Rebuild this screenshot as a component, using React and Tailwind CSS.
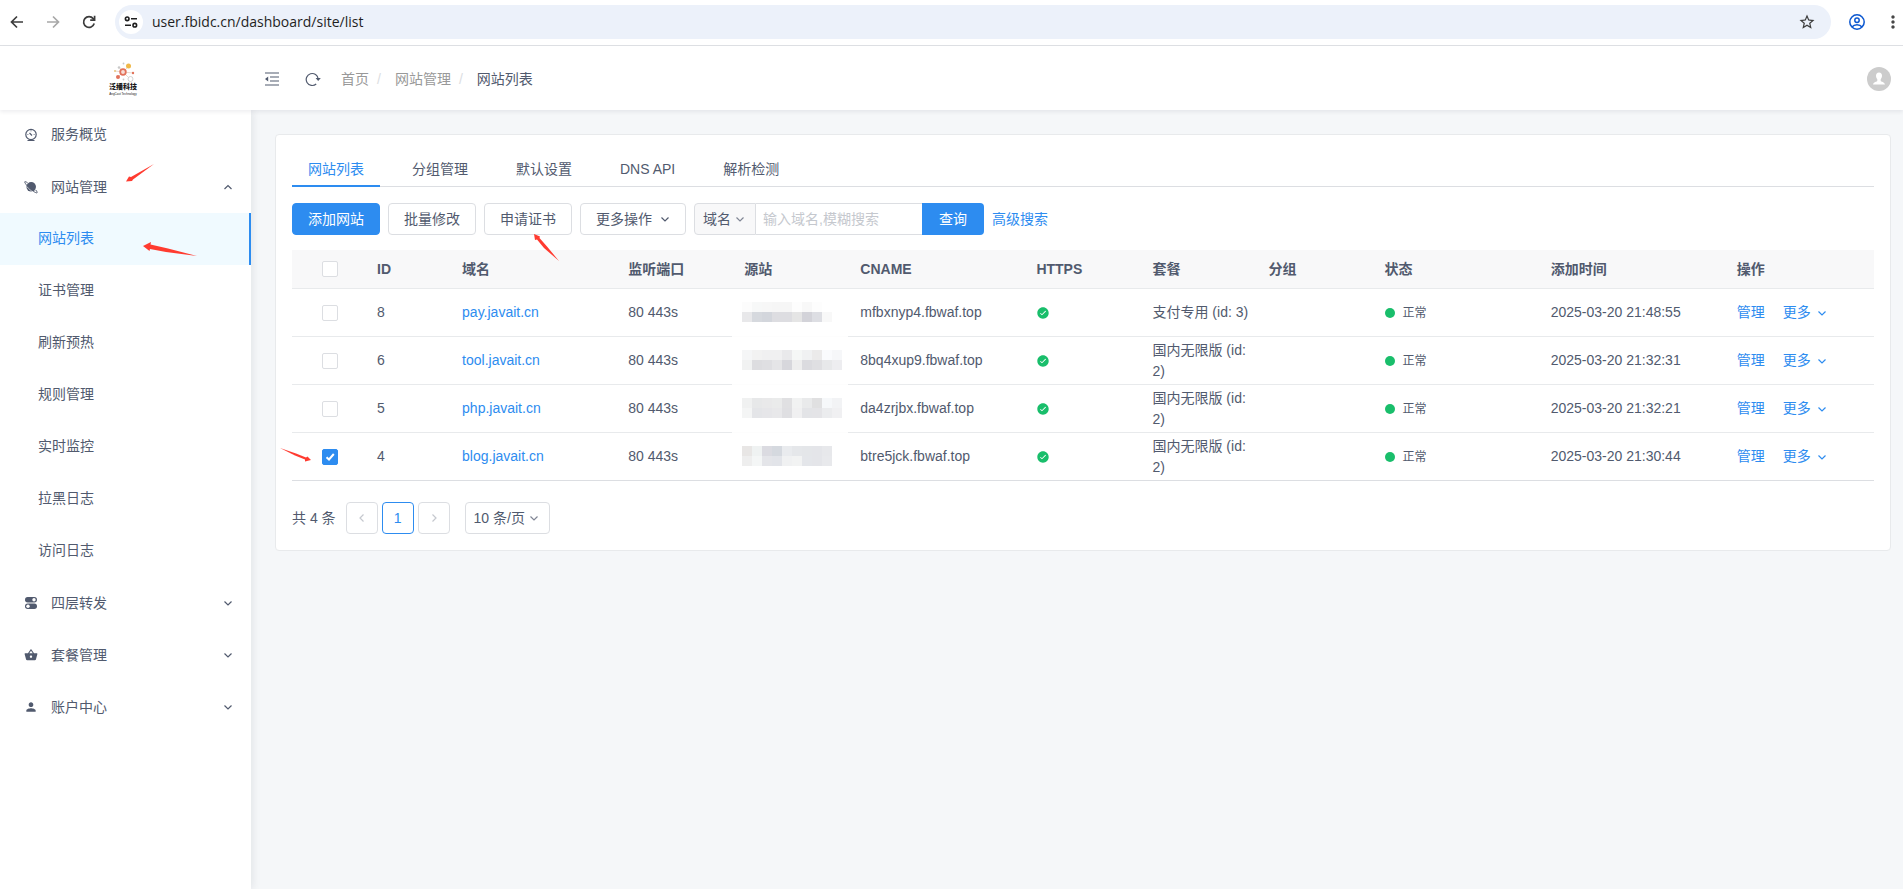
import React, { useState } from 'react';
import { IoIosCheckmarkCircle } from 'react-icons/io';
import { MdOutlineStarBorder, MdMoreVert, MdPerson, MdShoppingBasket } from 'react-icons/md';

const sites = [
  {
    id: 8,
    domain: 'pay.javait.cn',
    cname: 'mfbxnyp4.fbwaf.top',
    plan: '支付专用 (id: 3)',
    time: '2025-03-20 21:48:55',
    mosaic: [
      ['#fcfcfc', '#f7f8f8', '#f7f7f7', '#f6f6f6', '#f6f6f6', '#fdfdfd', '#f8f8f8', '#fdfdfd', '#fff', '#fff'],
      ['#e8e8ea', '#d6d9de', '#d3d6dc', '#dddde1', '#dddde1', '#e5e5e5', '#d3d3d9', '#dddee3', '#f8f8f8', '#fff'],
    ],
  },
  {
    id: 6,
    domain: 'tool.javait.cn',
    cname: '8bq4xup9.fbwaf.top',
    plan: '国内无限版 (id: 2)',
    time: '2025-03-20 21:32:31',
    mosaic: [
      ['#f5f6f7', '#f2f2f2', '#f0f0f1', '#f0f0f1', '#e9e9eb', '#f5f7f6', '#f0f1f2', '#ebeaea', '#fafbfd', '#f6f7f9'],
      ['#f1f2f2', '#dddde0', '#dfdfe2', '#e5e5e7', '#d7d7dc', '#eeeeee', '#dbdbdf', '#dfdfe2', '#e7e8ea', '#ededf0'],
    ],
  },
  {
    id: 5,
    domain: 'php.javait.cn',
    cname: 'da4zrjbx.fbwaf.top',
    plan: '国内无限版 (id: 2)',
    time: '2025-03-20 21:32:21',
    mosaic: [
      ['#f0f1f1', '#e7e8e9', '#e9e9ea', '#eaebeb', '#e0e0e2', '#f1f2f2', '#e9eaeb', '#e0e0e1', '#f6f8fa', '#f2f3f5'],
      ['#f4f5f5', '#e4e5e8', '#e6e6e9', '#e8e8ea', '#dfdfe2', '#f0f0f1', '#e3e4e7', '#e4e4e7', '#ebecee', '#f0f0f2'],
    ],
  },
  {
    id: 4,
    domain: 'blog.javait.cn',
    cname: 'btre5jck.fbwaf.top',
    plan: '国内无限版 (id: 2)',
    time: '2025-03-20 21:30:44',
    mosaic: [
      ['#e8e6e5', '#eff2f2', '#dbdbe1', '#d5d9df', '#e9ebee', '#e5e7ea', '#e4e6e9', '#e4e5e9', '#e7e8eb', '#fff'],
      ['#eeeeee', '#f4f6f6', '#e4e5e9', '#e2e4e9', '#f0f1f2', '#f2f3f3', '#e4e6ea', '#e4e5e9', '#e8e9ec', '#fff'],
    ],
  },
];

const siteMenu = ['网站列表', '证书管理', '刷新预热', '规则管理', '实时监控', '拉黑日志', '访问日志'];

const tabs = ['网站列表', '分组管理', '默认设置', 'DNS API', '解析检测'];

const Chevron = ({ className = '', d = 'M1.5 3.5 5 7l3.5-3.5' }) => (
  <svg className={`size-[10px] shrink-0 ${className}`} viewBox="0 0 10 10" fill="none" stroke="currentColor" strokeWidth="1.2" aria-hidden="true">
    <path d={d} />
  </svg>
);

const Button = ({ primary, children }) => (
  <button
    className={`flex h-8 items-center gap-1 rounded border px-[15px] ${
      primary ? 'border-[#2d8cf0] bg-[#2d8cf0] text-white' : 'border-[#dcdee2] bg-white'
    }`}
  >
    {children}
  </button>
);

const Checkbox = ({ label, checked, onChange }) => (
  <span className="relative block size-4">
    <input
      type="checkbox"
      aria-label={label}
      checked={checked}
      onChange={onChange}
      className="block size-4 appearance-none rounded-xs border border-[#dcdee2] bg-white checked:border-[#2d8cf0] checked:bg-[#2d8cf0]"
    />
    {checked && (
      <svg className="pointer-events-none absolute inset-0 size-4" viewBox="0 0 16 16" fill="none" stroke="#fff" strokeWidth="2" aria-hidden="true">
        <path d="M4.5 8.2 7 10.5 11.8 5" />
      </svg>
    )}
  </span>
);

const BrowserBar = () => (
  <div className="flex h-[46px] items-center border-b border-[#dfe1e5] bg-white pb-px pl-2 text-[#474747]">
    <button aria-label="Back" className="flex w-[18px] justify-center text-[#3c3c3c]">
      <svg className="size-4" viewBox="0 0 16 16" fill="none" stroke="currentColor" strokeWidth="1.7">
        <path d="M14 8H3M8 2.5 2.5 8 8 13.5" />
      </svg>
    </button>
    <button aria-label="Forward" className="ml-[18px] flex w-[18px] justify-center text-[#a8a8a8]">
      <svg className="size-4" viewBox="0 0 16 16" fill="none" stroke="currentColor" strokeWidth="1.7">
        <path d="M2 8h11M8 2.5 13.5 8 8 13.5" />
      </svg>
    </button>
    <button aria-label="Reload" className="ml-[18px] flex w-[18px] justify-center text-[#3c3c3c]">
      <svg className="size-4" viewBox="0 0 16 16" fill="none" stroke="currentColor" strokeWidth="1.7">
        <path d="M13.2 9.5A5.4 5.4 0 1 1 12.2 4.6L13.3 6" />
        <path d="M13.6 1.8V6.2H9.2" />
      </svg>
    </button>
    <div className="ml-[17px] flex h-[34px] flex-1 items-center rounded-full bg-[#ecf1fa] pr-[15px] pl-1">
      <button aria-label="Site information" className="flex size-6 items-center justify-center rounded-full bg-white text-[#1f1f1f]">
        <svg className="size-[14px]" viewBox="0 0 14 14" fill="none" stroke="currentColor" strokeWidth="1.6">
          <circle cx="3.2" cy="3.8" r="1.8" />
          <path d="M7 3.8h6M1 10.2h6" />
          <circle cx="10.8" cy="10.2" r="1.8" />
        </svg>
      </button>
      <input
        aria-label="Address"
        defaultValue="user.fbidc.cn/dashboard/site/list"
        className="ml-[9px] flex-1 bg-transparent font-['Open_Sans',sans-serif] text-sm text-[#1f1f1f] outline-none"
      />
      <button aria-label="Bookmark">
        <MdOutlineStarBorder className="size-[18px] text-[#3c3c3c]" />
      </button>
    </div>
    <button aria-label="Profile" className="ml-[18px] text-[#0b57d0]">
      <svg className="size-4" viewBox="0 0 16 16" fill="none" stroke="currentColor" strokeWidth="1.5">
        <circle cx="8" cy="8" r="7.2" />
        <circle cx="8" cy="6.3" r="2.2" />
        <path d="M3 13c1.200-1.600 3-2.300 5-2.300s3.800.7 5 2.300" />
      </svg>
    </button>
    <button aria-label="Menu" className="ml-[18px]">
      <MdMoreVert className="size-5" />
    </button>
  </div>
);

const Logo = () => (
  <div className="flex flex-col items-center text-[#1a1a1a]">
    <svg className="h-5 w-6" viewBox="0 0 24 20" fill="none" aria-hidden="true">
      <path d="M12 10 18 4M12 10 7 15M12 10 19 17M12 10 22 11M12 10 8 5M12 10 4 9" stroke="#e0c8b8" strokeWidth=".7" />
      <circle cx="12" cy="10" r="2.800" stroke="#e2725b" strokeWidth="1.800" fill="#f7ddd5" />
      <circle cx="17.500" cy="4" r="2.500" fill="#f0b848" />
      <circle cx="7" cy="15" r="2" fill="#e2725b" />
      <circle cx="19.500" cy="17" r="2.500" stroke="#c8c8c8" strokeWidth=".8" fill="#fff" />
      <circle cx="22" cy="11" r="1.200" fill="#e2725b" />
      <circle cx="8" cy="5.500" r="1.300" fill="#c9c9c9" />
      <circle cx="12.500" cy="1.500" r=".9" fill="#c9c9c9" />
      <circle cx="12.500" cy="17.500" r=".9" fill="#c9c9c9" />
      <circle cx="4" cy="9" r=".9" fill="#e8c070" />
    </svg>
    <span className="text-[7px] leading-[10px] font-black">泛播科技</span>
    <span className="text-[3px] leading-[4px]">AngCast Technology</span>
  </div>
);

const Header = () => (
  <header className="relative z-20 flex h-16 items-center bg-white pt-0.5 pr-3 shadow-[0_2px_4px_rgba(0,21,41,0.07)]">
    <a href="#home" aria-label="首页" className="flex w-[246px] justify-center">
      <Logo />
    </a>
    <button aria-label="收起菜单" className="ml-[18px]">
      <svg className="size-4" viewBox="0 0 16 16" fill="none" stroke="currentColor" strokeWidth="1.2">
        <path d="M1 2h14M6 6h9M6 10h9M1 14h14" />
        <path d="M4.200 5.500v5L1 8z" fill="currentColor" stroke="none" />
      </svg>
    </button>
    <button aria-label="刷新" className="ml-[25px]">
      <svg className="size-4" viewBox="0 0 16 16" fill="none" stroke="currentColor" strokeWidth="1.2">
        <path d="M11.200 13A6 6 0 1 1 13.200 8" />
        <path d="M10.600 7h5.200L13.200 10z" fill="currentColor" stroke="none" />
      </svg>
    </button>
    <nav className="ml-5 flex items-center text-[#999]">
      <a href="#home">首页</a>
      <span className="mr-[14px] ml-2 text-[#dcdee2]">/</span>
      <a href="#site">网站管理</a>
      <span className="mr-[14px] ml-2 text-[#dcdee2]">/</span>
      <span className="text-[#515a6e]">网站列表</span>
    </nav>
    <button aria-label="账户" className="ml-auto flex size-6 items-center justify-center rounded-full bg-[#ccc] text-white">
      <svg className="size-[14px]" viewBox="0 0 14 14" fill="currentColor">
        <path d="M7 .5C5 .5 4 1.900 4 3.700c0 1.500.6 2.700 1.300 3.500v1.500C5.100 9.900 1.300 9.900 1 12.500h12c-.3-2.600-4.100-2.600-4.300-3.800V7.200C9.400 6.400 10 5.200 10 3.700 10 1.900 9 .5 7 .5z" />
      </svg>
    </button>
  </header>
);

const MenuGroup = ({ icon, title, open, onClick }) => (
  <button onClick={onClick} className="flex h-[52px] w-full items-center pr-[18px] pl-6 text-left">
    {icon}
    <span className="ml-[13px] flex-1">{title}</span>
    <Chevron d={open ? 'M1.500 7 5 3.500 8.500 7' : undefined} />
  </button>
);

const Sidebar = () => {
  const [open, setOpen] = useState(true);

  return (
    <aside className="relative z-10 w-[251px] shrink-0 bg-white shadow-[2px_0_8px_rgba(0,21,41,0.08)]">
      <a href="#overview" className="flex h-[51px] items-center pb-0.5 pl-6">
        <svg className="size-[14px]" viewBox="0 0 14 14" fill="none" stroke="currentColor" strokeWidth="1.2" aria-hidden="true">
          <circle cx="7" cy="6.500" r="5.200" />
          <path d="M3.500 12.500h7M5.500 5 8 7.500M7 2.500v.8M3.500 6.500h.8M9.700 6.500h.8" />
        </svg>
        <span className="ml-[13px]">服务概览</span>
      </a>
      <MenuGroup
        title="网站管理"
        open={open}
        onClick={() => setOpen(!open)}
        icon={
          <svg className="size-[14px]" viewBox="0 0 14 14" aria-hidden="true">
            <circle cx="7.200" cy="6.800" r="4.800" fill="currentColor" />
            <path d="M3.600 2.800C1.800 1.600 1 1.400.8 1.700c-.5.800 2 4 5.400 7 3.200 2.900 6.300 4.700 6.900 4 .3-.3-.1-1.200-1.500-2.900" fill="none" stroke="currentColor" />
            <path d="M2.800 6.500c2 2.500 4.200 4.200 6.200 5.300" fill="none" stroke="#fff" strokeWidth=".6" />
          </svg>
        }
      />
      {open &&
        siteMenu.map((item, index) => (
          <a
            key={item}
            href={`#${item}`}
            className={`flex h-[52px] items-center pb-0.5 pl-[38px] ${
              index === 0 ? 'border-r-2 border-[#2d8cf0] bg-[#f0faff] text-[#2d8cf0]' : ''
            }`}
          >
            {item}
          </a>
        ))}
      <MenuGroup
        title="四层转发"
        icon={
          <svg className="size-[14px]" viewBox="0 0 14 14" aria-hidden="true">
            <rect x="1" y="1" width="12" height="5.500" rx="2.700" fill="currentColor" />
            <circle cx="10" cy="3.750" r="1.700" fill="#fff" />
            <rect x="1" y="7.500" width="12" height="5.500" rx="2.700" fill="currentColor" />
            <circle cx="4" cy="10.250" r="1.700" fill="#fff" />
          </svg>
        }
      />
      <MenuGroup title="套餐管理" icon={<MdShoppingBasket className="size-[14px]" />} />
      <MenuGroup title="账户中心" icon={<MdPerson className="size-[14px]" />} />
    </aside>
  );
};

const Toolbar = () => (
  <div className="mt-4 flex items-center gap-2">
    <Button primary>添加网站</Button>
    <Button>批量修改</Button>
    <Button>申请证书</Button>
    <Button>
      更多操作
      <Chevron className="ml-1" />
    </Button>
    <div className="flex h-8">
      <div className="relative flex items-center rounded-l border border-[#dcdee2] bg-[#f8f8f9]">
        <select aria-label="搜索字段" className="h-full w-[60px] appearance-none bg-transparent pl-2 outline-none">
          <option>域名</option>
        </select>
        <Chevron className="pointer-events-none absolute right-[10px] text-[#808695]" />
      </div>
      <input
        aria-label="搜索"
        placeholder="输入域名,模糊搜索"
        className="w-[166px] border-y border-[#dcdee2] px-[7px] outline-none placeholder:text-[#c5c8ce]"
      />
      <button className="w-[62px] rounded-r bg-[#2d8cf0] text-white">查询</button>
    </div>
    <a href="#search" className="text-[#2d8cf0]">高级搜索</a>
  </div>
);

const Mosaic = ({ rows }) => (
  <div className="-mt-0.5 w-[100px]" aria-hidden="true">
    {rows.map((row, i) => (
      <div key={i} className="flex">
        {row.map((color, j) => (
          <span key={j} className="size-[10px]" style={{ backgroundColor: color }} />
        ))}
      </div>
    ))}
  </div>
);

const SiteTable = () => {
  const [selected, setSelected] = useState([4]);

  const toggle = (id) => {
    setSelected(selected.includes(id) ? selected.filter((item) => item !== id) : [...selected, id]);
  };

  const toggleAll = () => {
    setSelected(selected.length === sites.length ? [] : sites.map((site) => site.id));
  };

  return (
    <table className="mt-[15px] w-full table-fixed border-separate border-spacing-0 text-left">
      <thead>
        <tr className="h-[39px] bg-[#f8f8f9] *:border-b *:border-[#e8eaec]">
          <th className="w-[67px] pl-[30px]">
            <Checkbox label="全选" checked={selected.length === sites.length} onChange={toggleAll} />
          </th>
          <th className="w-[85px] pl-[18px]">ID</th>
          <th className="w-[166px] pl-[18px]">域名</th>
          <th className="w-[116px] pl-[18px]">监听端口</th>
          <th className="w-[116px] pl-[18px]">源站</th>
          <th className="w-[176px] pl-[18px]">CNAME</th>
          <th className="w-[116px] pl-[18px]">HTTPS</th>
          <th className="w-[116px] pl-[18px]">套餐</th>
          <th className="w-[116px] pl-[18px]">分组</th>
          <th className="w-[166px] pl-[18px]">状态</th>
          <th className="w-[186px] pl-[18px]">添加时间</th>
          <th className="w-[155px] pl-[18px]">操作</th>
        </tr>
      </thead>
      <tbody>
        {sites.map((site, index) => (
          <tr key={site.id} className="h-12 *:border-b *:border-[#e8eaec] last:*:border-[#dcdee2]">
            <td className="pl-[30px]">
              <Checkbox label={site.domain} checked={selected.includes(site.id)} onChange={() => toggle(site.id)} />
            </td>
            <td className="pl-[18px]">{site.id}</td>
            <td className="pl-[18px]">
              <a href={`#${site.domain}`} className="text-[#2d8cf0]">{site.domain}</a>
            </td>
            <td className="pl-[18px]">80 443s</td>
            <td className="relative pl-4">
              <Mosaic rows={site.mosaic} />
              {/* the masked area also hides the row line */}
              {index < sites.length - 1 && <span className="absolute -bottom-px left-1.5 h-px w-[116px] bg-[#fdfdfd]" />}
            </td>
            <td className="pl-[18px]">{site.cname}</td>
            <td className="pl-[18px]">
              <IoIosCheckmarkCircle className="size-[14px] text-[#19be6b]" />
            </td>
            <td className="pl-[18px]">{site.plan}</td>
            <td className="pl-[18px]"></td>
            <td className="pl-[18px]">
              <span className="flex items-center text-xs">
                <span className="mr-2 size-[10px] rounded-full bg-[#19be6b]" />
                正常
              </span>
            </td>
            <td className="pl-[18px]">{site.time}</td>
            <td className="pl-[18px] text-[#2d8cf0]">
              <div className="flex items-center">
                <a href="#manage">管理</a>
                <button className="ml-[18px] flex items-center gap-[6px]">
                  更多
                  <Chevron />
                </button>
              </div>
            </td>
          </tr>
        ))}
      </tbody>
    </table>
  );
};

const Pagination = () => (
  <div className="mt-[21px] flex items-center">
    <span className="mr-[10px]">共 4 条</span>
    <button aria-label="上一页" disabled className="flex size-8 items-center justify-center rounded border border-[#dcdee2] text-[#c5c8ce]">
      <Chevron d="M6.500 1.500 3 5l3.500 3.500" />
    </button>
    <button className="ml-1 size-8 rounded border border-[#2d8cf0] text-[#2d8cf0]">1</button>
    <button aria-label="下一页" disabled className="ml-1 flex size-8 items-center justify-center rounded border border-[#dcdee2] text-[#c5c8ce]">
      <Chevron d="M3.500 1.500 7 5 3.500 8.500" />
    </button>
    <div className="relative ml-[15px] flex h-8 items-center rounded border border-[#dcdee2]">
      <select aria-label="每页条数" className="h-full w-[83px] appearance-none bg-transparent pl-2 outline-none">
        <option>10 条/页</option>
      </select>
      <Chevron className="pointer-events-none absolute right-[10px] text-[#808695]" />
    </div>
  </div>
);

// Red pointers that mark the steps, drawn over the page
const Marks = () => (
  <div className="pointer-events-none absolute inset-0 z-30 text-[#ff3b30]" aria-hidden="true">
    <svg className="absolute top-[164px] left-[125px] h-[20px] w-[30px]" viewBox="0 0 30 20" fill="currentColor">
      <path d="M29 0 8 15.500 7 17 1 17.500 4 12.500 6 13z" />
    </svg>
    <svg className="absolute top-[242px] left-[142px] h-[16px] w-[56px]" viewBox="0 0 56 16" fill="currentColor">
      <path d="M1 4 9 0 8.500 2.500 26 6.500 55 14 24 10 8 7 7.500 9z" />
    </svg>
    <svg className="absolute top-[234px] left-[533px] h-[28px] w-[27px]" viewBox="0 0 27 28" fill="currentColor">
      <path d="M1 0 7 2.500 6.500 4 14 12.500 26 27 11 14 4 5.500 2 6z" />
    </svg>
    <svg className="absolute top-[448px] left-[280px] h-[14px] w-[32px]" viewBox="0 0 32 14" fill="currentColor">
      <path d="M0 0 16 5.500 26 9.500 27.500 8.500 31 12 25 13.500 25 11.500 15 7.500z" />
    </svg>
  </div>
);

const App = () => {
  const [tab, setTab] = useState('网站列表');

  return (
    <div className="relative flex min-h-screen flex-col bg-[#f5f7f9] font-['Liberation_Sans','Noto_Sans_CJK_SC',sans-serif] text-sm leading-[21px] text-[#515a6e]">
      <BrowserBar />
      <Header />
      <div className="flex flex-1">
        <Sidebar />
        <main className="min-w-0 flex-1 pt-6 pr-3 pb-6 pl-6">
          <section className="rounded border border-[#e8eaec] bg-white p-4">
            <div role="tablist" className="flex h-9 gap-4 border-b border-[#dcdee2]">
              {tabs.map((item) => (
                <button
                  key={item}
                  role="tab"
                  aria-selected={tab === item}
                  onClick={() => setTab(item)}
                  className={`h-9 border-b-2 px-4 pt-0.5 ${
                    tab === item ? 'border-[#2d8cf0] text-[#2d8cf0]' : 'border-transparent'
                  }`}
                >
                  {item}
                </button>
              ))}
            </div>
            <Toolbar />
            <SiteTable />
            <Pagination />
          </section>
        </main>
      </div>
      <Marks />
    </div>
  );
};

export default App;
